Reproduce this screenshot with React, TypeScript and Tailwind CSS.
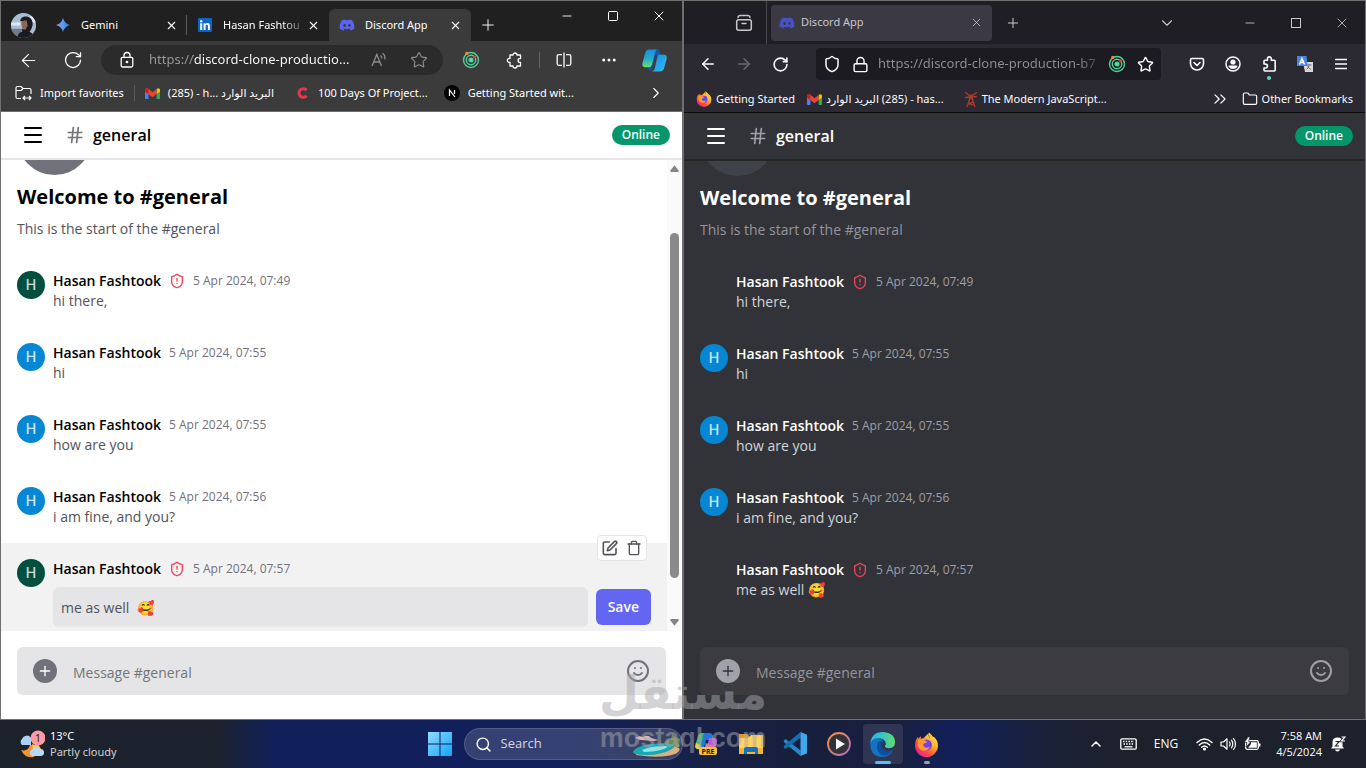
import type { ReactNode } from "react";
import {
  ArrowLeft,
  ArrowRight,
  ChevronDown,
  ChevronRight,
  ChevronsRight,
  ChevronUp,
  Ellipsis,
  Folder,
  Hash,
  Lock,
  Menu,
  Minus,
  Plus,
  RotateCw,
  Search,
  Shield,
  ShieldAlert,
  Smile,
  Square,
  Star,
  Trash,
  X,
} from "lucide-react";
import { FaDiscord } from "react-icons/fa";
import { clsx } from "clsx";

const messages = [
  { id: 1, owner: true, time: "5 Apr 2024, 07:49", text: "hi there," },
  { id: 2, owner: false, time: "5 Apr 2024, 07:55", text: "hi" },
  { id: 3, owner: false, time: "5 Apr 2024, 07:55", text: "how are you" },
  { id: 4, owner: false, time: "5 Apr 2024, 07:56", text: "i am fine, and you?" },
  { id: 5, owner: true, time: "5 Apr 2024, 07:57", text: "me as well 🥰" },
];

export default function App() {
  return (
    <div className="relative flex h-screen flex-col overflow-hidden font-['Open_Sans','DejaVu_Sans',sans-serif]">
      <div className="grid min-h-0 flex-1 grid-cols-2">
        <EdgeWindow />
        <FirefoxWindow />
      </div>
      <Taskbar />
      <Watermark />
    </div>
  );
}

function IconButton({
  label,
  className,
  children,
}: {
  label: string;
  className?: string;
  children: ReactNode;
}) {
  return (
    <button
      type="button"
      aria-label={label}
      className={clsx("grid shrink-0 place-items-center", className)}
    >
      {children}
    </button>
  );
}

/* Edge */

function EdgeWindow() {
  return (
    <section className="flex min-h-0 min-w-0 flex-col border border-[#6f6f6f] bg-[#3b3b3b] text-white">
      <div className="flex h-10 shrink-0 items-end bg-[#202020] pl-[10px]">
        <div className="mr-[9px] flex h-8 items-center">
          <ProfilePhoto />
        </div>
        <EdgeTab title="Gemini" icon={<GeminiIcon />} divider />
        <EdgeTab title="Hasan Fashtou" icon={<LinkedInIcon />} fade />
        <EdgeTab
          title="Discord App"
          icon={<FaDiscord size={16} className="text-[#5865f2]" />}
          active
        />
        <IconButton label="New tab" className="h-8 w-[34px]">
          <Plus size={18} strokeWidth={1.25} />
        </IconButton>
        <div className="ml-auto flex self-start">
          <IconButton label="Minimize" className="h-[30px] w-[46px]">
            <Minus size={14} strokeWidth={1.5} />
          </IconButton>
          <IconButton label="Maximize" className="h-[30px] w-[46px]">
            <Square size={12} strokeWidth={2} />
          </IconButton>
          <IconButton label="Close" className="h-[30px] w-[46px]">
            <X size={16} strokeWidth={1.5} />
          </IconButton>
        </div>
      </div>

      <div className="flex h-[38px] shrink-0 items-center">
        <IconButton label="Back" className="h-8 w-[55px]">
          <ArrowLeft size={21} strokeWidth={1.25} />
        </IconButton>
        <IconButton label="Refresh" className="h-8 w-[34px]">
          <RotateCw size={20} strokeWidth={1.5} />
        </IconButton>
        <div className="ml-[11px] flex h-[30px] min-w-0 flex-1 items-center rounded-full bg-[#2b2b2b] pr-3 pl-4">
          <PageLockIcon />
          <input
            aria-label="Address"
            defaultValue="https://discord-clone-productio..."
            className="ml-[12px] min-w-0 flex-1 bg-[linear-gradient(90deg,#9a9a9a_44px,#ffffff_44px)] bg-clip-text font-['Noto_Sans',sans-serif] text-[13px] text-transparent outline-none"
          />
          <IconButton label="Read aloud" className="h-6 w-10 text-[#8d8d8d]">
            <ReadAloudIcon />
          </IconButton>
          <IconButton label="Add to favorites" className="ml-2 h-6 w-6 text-[#8d8d8d]">
            <Star size={18} strokeWidth={1.5} />
          </IconButton>
        </div>
        <IconButton label="React extension" className="h-8 w-14">
          <OrbitIcon />
        </IconButton>
        <IconButton label="Extensions" className="h-8 w-8">
          <PuzzleIcon />
        </IconButton>
        <span className="mx-2 h-4 w-px bg-[#666666]" />
        <IconButton label="Split screen" className="h-8 w-8">
          <SplitIcon />
        </IconButton>
        <IconButton label="Settings" className="h-8 w-[58px]">
          <Ellipsis size={18} />
        </IconButton>
        <IconButton label="Copilot" className="mr-3 h-8 w-8">
          <CopilotIcon size={25} />
        </IconButton>
      </div>

      <nav className="flex h-8 shrink-0 items-center pb-1 pl-[14px] font-['Noto_Sans','DejaVu_Sans',sans-serif] text-[11px]">
        <a href="#import" className="flex items-center gap-2">
          <ImportFolderIcon />
          Import favorites
        </a>
        <span className="mx-[10px] h-4 w-px bg-[#5a5a5a]" />
        <a href="#mail" className="flex items-center gap-2">
          <GmailIcon />
          <span>
            (285) - h... <bdi>البريد الوارد</bdi>
          </span>
        </a>
        <a href="#projects" className="ml-5 flex items-center gap-2">
          <span className="grid h-4 w-4 place-items-center">
            <LetterCIcon />
          </span>
          100 Days Of Project...
        </a>
        <a href="#next" className="ml-4 flex items-center gap-2">
          <NextIcon />
          Getting Started wit...
        </a>
        <IconButton label="More favorites" className="mr-3 ml-auto h-6 w-7">
          <ChevronRight size={18} strokeWidth={1.5} />
        </IconButton>
      </nav>

      <div className="flex min-h-0 flex-1 flex-col border-t border-[#6f6f6f] bg-white text-black">
        <ChatHeader />
        <div className="flex min-h-0 flex-1">
          <div className="min-w-0 flex-1 overflow-hidden">
            <ChatWelcome />
            {messages.map((message) => (
              <ChatItem
                key={message.id}
                {...message}
                editing={message.id === 5}
              />
            ))}
          </div>
          <Scrollbar />
        </div>
        <Composer />
      </div>
    </section>
  );
}

function EdgeTab({
  title,
  icon,
  active,
  divider,
  fade,
}: {
  title: string;
  icon: ReactNode;
  active?: boolean;
  divider?: boolean;
  fade?: boolean;
}) {
  return (
    <div
      className={clsx(
        "relative flex h-8 w-[142px] items-center rounded-t-md px-[10px] font-['Noto_Sans',sans-serif] text-[11px]",
        active && "bg-[#3b3b3b]",
      )}
    >
      <span className="grid w-4 place-items-center">{icon}</span>
      <span
        className={clsx(
          "ml-[10px] min-w-0 flex-1 overflow-hidden whitespace-nowrap",
          fade && "mask-r-from-70%",
        )}
      >
        {title}
      </span>
      <IconButton label={`Close ${title}`} className="w-3">
        <X size={13} strokeWidth={2} />
      </IconButton>
      {divider && (
        <span className="absolute top-[6px] right-0 h-5 w-px bg-[#5c5c5c]" />
      )}
    </div>
  );
}

/* Firefox */

function FirefoxWindow() {
  return (
    <section className="flex min-h-0 min-w-0 flex-col border border-[#6f6f6f] bg-[#2b2a33] text-[#fbfbfe]">
      <div className="flex h-[43px] shrink-0 items-center bg-[#1f1e25]">
        <IconButton label="Firefox View" className="ml-10 h-9 w-10 text-[#c8c8cc]">
          <ViewIcon />
        </IconButton>
        <span className="mr-1 ml-[2px] h-full w-px bg-[#4a4950]" />
        <div className="flex h-9 w-[221px] items-center rounded bg-[#3a3944] px-2 font-['Noto_Sans',sans-serif] text-[11px] text-[#c8c8cc]">
          <FaDiscord size={16} className="text-[#4752c4]" />
          <span className="ml-[6px] flex-1">Discord App</span>
          <IconButton label="Close tab" className="w-4">
            <X size={13} strokeWidth={1.5} />
          </IconButton>
        </div>
        <IconButton label="New tab" className="h-9 w-[42px] text-[#c8c8cc]">
          <Plus size={16} strokeWidth={1.5} />
        </IconButton>
        <div className="ml-auto flex text-[#c8c8cc]">
          <IconButton label="List all tabs" className="mr-[37px] h-9 w-[46px]">
            <ChevronDown size={18} strokeWidth={1.5} />
          </IconButton>
          <IconButton label="Minimize" className="h-9 w-[46px]">
            <Minus size={14} strokeWidth={1.5} />
          </IconButton>
          <IconButton label="Maximize" className="h-9 w-[46px]">
            <span className="h-[10px] w-[10px] border border-current" />
          </IconButton>
          <IconButton label="Close" className="h-9 w-[46px]">
            <X size={16} strokeWidth={1.25} />
          </IconButton>
        </div>
      </div>

      <div className="flex h-10 shrink-0 items-center px-[6px]">
        <IconButton label="Back" className="h-8 w-9">
          <ArrowLeft size={18} strokeWidth={2} />
        </IconButton>
        <IconButton label="Forward" className="h-8 w-9 text-[#6b6a72]">
          <ArrowRight size={18} strokeWidth={2} />
        </IconButton>
        <IconButton label="Reload" className="h-8 w-9">
          <RotateCw size={17} strokeWidth={2.25} />
        </IconButton>
        <div className="mr-[18px] ml-[18px] flex h-8 min-w-0 flex-1 items-center rounded bg-[#1c1b22] px-[2px]">
          <IconButton label="Tracking protection" className="w-7">
            <Shield size={18} strokeWidth={2} />
          </IconButton>
          <IconButton label="Connection secure" className="w-7">
            <Lock size={17} strokeWidth={2} />
          </IconButton>
          <input
            aria-label="Address"
            defaultValue="https://discord-clone-production-b7"
            className="ml-1 min-w-0 flex-1 bg-[linear-gradient(90deg,#8f8f96_200px,#1c1b22_230px)] bg-clip-text font-['Noto_Sans',sans-serif] text-[13px] text-transparent outline-none"
          />
          <IconButton label="React extension" className="w-7">
            <OrbitIcon />
          </IconButton>
          <IconButton label="Bookmark this page" className="w-7">
            <Star size={17} strokeWidth={2} />
          </IconButton>
        </div>
        <IconButton label="Save to Pocket" className="h-8 w-9">
          <PocketIcon />
        </IconButton>
        <IconButton label="Account" className="h-8 w-9">
          <AccountIcon />
        </IconButton>
        <IconButton label="Extensions" className="relative h-8 w-9">
          <FirefoxPuzzleIcon />
          <span className="absolute bottom-0 h-1 w-1 rounded-full bg-[#54e0c4]" />
        </IconButton>
        <IconButton label="Translate" className="h-8 w-9">
          <TranslateIcon />
        </IconButton>
        <IconButton label="Open menu" className="h-8 w-9">
          <MenuLinesIcon />
        </IconButton>
      </div>

      <nav className="flex h-7 shrink-0 items-center px-3 pt-[2px] font-['Noto_Sans','DejaVu_Sans',sans-serif] text-[11px]">
        <a href="#start" className="flex items-center gap-1">
          <FirefoxIcon size={16} />
          Getting Started
        </a>
        <a href="#mail" className="ml-3 flex items-center gap-1">
          <GmailIcon />
          <span>
            <bdi>البريد الوارد</bdi> (285) - has...
          </span>
        </a>
        <a href="#js" className="ml-5 flex items-center gap-1">
          <TowerIcon />
          The Modern JavaScript...
        </a>
        <IconButton label="More bookmarks" className="mr-3 ml-auto">
          <ChevronsRight size={20} strokeWidth={1.5} />
        </IconButton>
        <a href="#other" className="flex items-center gap-1">
          <Folder size={16} strokeWidth={1.75} />
          Other Bookmarks
        </a>
      </nav>

      <div className="flex min-h-0 flex-1 flex-col border-t border-[#0c0c0d] bg-[#313338] text-white">
        <ChatHeader dark />
        <div className="min-h-0 flex-1 overflow-hidden">
          <ChatWelcome dark />
          {messages.map((message) => (
            <ChatItem key={message.id} {...message} dark />
          ))}
        </div>
        <Composer dark />
      </div>
    </section>
  );
}

/* Chat page, shown light in one window and dark in the other */

function ChatHeader({ dark }: { dark?: boolean }) {
  return (
    <header
      className={clsx(
        "flex h-12 shrink-0 items-center border-b-2 px-3 font-semibold",
        dark ? "border-[#262626]" : "border-neutral-200",
      )}
    >
      <IconButton label="Open channels" className="h-10 w-10">
        <Menu size={24} />
      </IconButton>
      <Hash
        className={clsx(
          "mr-2 ml-3 h-5 w-5",
          dark ? "text-zinc-400" : "text-zinc-500",
        )}
      />
      <h1 className="text-base">general</h1>
      <span className="ml-auto rounded-full bg-[#059669] px-[10px] py-[2px] text-xs text-white">
        Online
      </span>
    </header>
  );
}

function ChatWelcome({ dark }: { dark?: boolean }) {
  return (
    <div className="mb-4 space-y-2 px-4">
      {/* only the lower edge of the channel badge is scrolled into view */}
      <div className="flex h-[15px] items-end overflow-hidden">
        <div
          className={clsx(
            "h-[75px] w-[75px] shrink-0 rounded-full",
            dark ? "bg-[#404249]" : "bg-zinc-500",
          )}
        />
      </div>
      <h2 className="text-xl font-bold">Welcome to #general</h2>
      <p
        className={clsx("text-sm", dark ? "text-[#95959d]" : "text-zinc-600")}
      >
        This is the start of the #general
      </p>
    </div>
  );
}

function ChatItem({
  owner,
  time,
  text,
  dark,
  editing,
}: {
  owner: boolean;
  time: string;
  text: string;
  dark?: boolean;
  editing?: boolean;
}) {
  return (
    <article
      className={clsx(
        "relative flex items-start gap-2 p-4",
        editing && "bg-[#f2f2f2]",
      )}
    >
      <Avatar owner={owner} hidden={dark && owner} />
      <div className="min-w-0 flex-1">
        <div className="flex items-center gap-2">
          <b className="text-sm font-semibold">Hasan Fashtook</b>
          {owner && <ShieldAlert className="h-4 w-4 text-[#f43f5e]" />}
          <time
            className={clsx("text-xs", dark ? "text-zinc-400" : "text-zinc-500")}
          >
            {time}
          </time>
        </div>
        {editing ? (
          <form className="flex items-center gap-2 pt-2">
            <input
              aria-label="Edit message"
              defaultValue={text.replace(" 🥰", "  🥰")}
              className="h-10 min-w-0 flex-1 rounded-md bg-[#e5e5e7] px-2 text-sm text-zinc-600 outline-none"
            />
            <button
              type="button"
              className="h-9 rounded-md bg-[#6366f1] px-3 text-sm font-semibold text-white"
            >
              Save
            </button>
          </form>
        ) : (
          <p
            className={clsx("text-sm", dark ? "text-zinc-300" : "text-zinc-600")}
          >
            {text}
          </p>
        )}
      </div>
      {editing && (
        <div className="absolute -top-2 right-5 flex gap-2 rounded-sm border border-zinc-200 bg-white p-1 text-zinc-600">
          <IconButton label="Edit">
            <EditIcon />
          </IconButton>
          <IconButton label="Delete">
            <Trash size={16} />
          </IconButton>
        </div>
      )}
    </article>
  );
}

function Avatar({ owner, hidden }: { owner: boolean; hidden?: boolean }) {
  if (hidden) return <span className="h-7 w-7 shrink-0" />;
  return (
    <span
      className={clsx(
        "grid h-7 w-7 shrink-0 place-items-center rounded-full font-[Inter,sans-serif] text-sm font-medium text-white/80",
        owner ? "bg-[#024f40]" : "bg-[#0587d3]",
      )}
    >
      H
    </span>
  );
}

function Scrollbar() {
  return (
    <div className="flex w-[15px] shrink-0 flex-col items-center bg-[#fafafa] py-1">
      <svg width="9" height="9" viewBox="0 0 9 9" fill="#858585">
        <path d="M4.5 1.2 8.6 6.6Q9 8 8 8H1Q0 8 .4 6.6Z" />
      </svg>
      <span className="mt-[60px] h-[345px] w-[9px] rounded-full bg-[#8a8a8a]" />
      <svg
        width="9"
        height="9"
        viewBox="0 0 9 9"
        fill="#858585"
        className="mt-auto"
      >
        <path d="M4.5 7.8.4 2.4Q0 1 1 1H8Q9 1 8.6 2.4Z" />
      </svg>
    </div>
  );
}

function Composer({ dark }: { dark?: boolean }) {
  return (
    <form className="shrink-0 p-4 pb-6">
      <div
        className={clsx(
          "flex h-12 items-center rounded-md px-4",
          dark ? "bg-[#3b3b40]" : "bg-[#e5e5e7]",
        )}
      >
        <IconButton
          label="Attach a file"
          className={clsx(
            "h-6 w-6 rounded-full",
            dark ? "bg-[#a1a1aa] text-[#313338]" : "bg-zinc-500 text-white",
          )}
        >
          <Plus size={16} />
        </IconButton>
        <input
          aria-label="Message #general"
          placeholder="Message #general"
          className={clsx(
            "h-6 min-w-0 flex-1 px-4 pt-[2px] text-sm outline-none",
            dark ? "placeholder:text-[#95959d]" : "placeholder:text-[#757575]",
          )}
        />
        <IconButton
          label="Insert emoji"
          className={dark ? "text-zinc-400" : "text-zinc-500"}
        >
          <Smile size={24} />
        </IconButton>
      </div>
    </form>
  );
}

/* Windows taskbar */

function Taskbar() {
  return (
    <footer className="flex h-12 shrink-0 items-center bg-[linear-gradient(90deg,#1c222c_0%,#1c222e_16%,#11205a_20%,#11205a_42%,#17214c_48%,#181f3c_58%,#181f40_66%,#11205a_70%,#1a2036_77%,#1c212b_82%)] text-xs text-white">
      <div className="flex flex-1 items-center gap-[5px] pl-[18px]">
        <WeatherIcon />
        <div className="font-['Noto_Sans',sans-serif] text-[11px] leading-4">
          <p>13°C</p>
          <p className="text-[#cfd0d2]">Partly cloudy</p>
        </div>
      </div>
      <div className="flex items-center gap-1">
        <IconButton label="Start" className="h-10 w-10">
          <WindowsIcon />
        </IconButton>
        <label className="flex h-8 w-[219px] items-center rounded-full border border-white/15 bg-white/15 pr-px pl-[10px]">
          <Search size={17} strokeWidth={2} />
          <input
            aria-label="Search"
            placeholder="Search"
            className="ml-[9px] min-w-0 flex-1 text-[13px] outline-none placeholder:text-[#d6d8e2]"
          />
          <BeachIcon />
        </label>
        <IconButton label="Copilot preview" className="h-10 w-10">
          <CopilotPreIcon />
        </IconButton>
        <IconButton label="File Explorer" className="h-10 w-10">
          <ExplorerIcon />
        </IconButton>
        <IconButton label="Visual Studio Code" className="h-10 w-10">
          <CodeIcon />
        </IconButton>
        <IconButton label="Media Player" className="h-10 w-10">
          <PlayerIcon />
        </IconButton>
        <IconButton
          label="Microsoft Edge"
          className="relative h-10 w-10 rounded bg-white/10"
        >
          <EdgeIcon />
          <span className="absolute bottom-0 h-[3px] w-4 rounded-full bg-[#4cc2ff]" />
        </IconButton>
        <IconButton label="Firefox" className="relative h-10 w-10">
          <FirefoxIcon size={25} />
          <span className="absolute bottom-0 h-[3px] w-[6px] rounded-full bg-[#9a9da5]" />
        </IconButton>
      </div>
      <div className="flex flex-1 items-center justify-end pr-[18px]">
        <IconButton label="Show hidden icons" className="w-8">
          <ChevronUp size={16} strokeWidth={2.25} />
        </IconButton>
        <IconButton label="Touch keyboard" className="w-8">
          <KeyboardIcon />
        </IconButton>
        <button type="button" className="w-11">
          ENG
        </button>
        <div className="flex w-20 items-center justify-center gap-[7px]">
          <WifiIcon />
          <VolumeIcon />
          <BatteryIcon />
        </div>
        <div className="w-[54px] text-right text-[11px] leading-4 whitespace-nowrap">
          <p>7:58 AM</p>
          <p>4/5/2024</p>
        </div>
        <IconButton label="Notifications" className="ml-[6px] w-5">
          <BellIcon />
        </IconButton>
      </div>
    </footer>
  );
}

function Watermark() {
  return (
    <div
      aria-hidden="true"
      className="pointer-events-none absolute bottom-4 left-1/2 -translate-x-1/2 text-center font-bold text-[#a8a8ac]/50"
    >
      <p
        dir="rtl"
        className="pb-2 font-['DejaVu_Sans',sans-serif] text-[46px] leading-[46px]"
      >
        مستقل
      </p>
      <p className="font-['Liberation_Sans',sans-serif] text-[27px] leading-7">
        mostaql.com
      </p>
    </div>
  );
}

/* Icons */

function ProfilePhoto() {
  return (
    <svg width="25" height="25" viewBox="0 0 24 24">
      <clipPath id="photo">
        <circle cx="12" cy="12" r="12" />
      </clipPath>
      <g clipPath="url(#photo)">
        <path fill="#a9bed6" d="M0 0h24v24H0z" />
        <path fill="#dfe7ef" d="M0 9h9v3H0zM18 3h6v6h-6z" />
        <path fill="#6f7c88" d="M0 15h10v9H0z" />
        <path fill="#8d6654" d="M10 6h6l1 8-3 3-3-2-1-4z" />
        <path
          fill="#1a1a20"
          d="M9 8c-1-5 9-7 11-1 2 4 0 8-2 11l-4 2-3-2-1-3 4 1 2-4-1-5zM6 24c0-4 4-7 8-7s8 3 8 7z"
        />
      </g>
    </svg>
  );
}

function GeminiIcon() {
  return (
    <svg width="14" height="14" viewBox="0 0 14 14">
      <defs>
        <linearGradient id="gem" x1="0" x2="1">
          <stop offset="0" stopColor="#8f8fd6" />
          <stop offset=".5" stopColor="#5b9cf0" />
          <stop offset="1" stopColor="#2f6cd0" />
        </linearGradient>
      </defs>
      <path d="M7 0Q8.500 5.500 14 7 8.500 8.500 7 14 5.500 8.500 0 7 5.500 5.500 7 0Z" fill="url(#gem)" />
    </svg>
  );
}

function LinkedInIcon() {
  return (
    <svg width="14" height="14" viewBox="0 0 14 14">
      <rect width="14" height="14" rx="1" fill="#0a66c2" />
      <g fill="#fff">
        <circle cx="3.2" cy="3.2" r="1.2" />
        <path d="M2.2 5.3h2V12h-2zM5.6 5.3h1.9v.9c.4-.7 1.1-1.1 2-1.1 1.9 0 2.4 1.2 2.4 3V12h-2V8.500c0-.9-.1-1.700-1.100-1.700s-1.200.8-1.200 1.700V12h-2z" />
      </g>
    </svg>
  );
}

function PageLockIcon() {
  return (
    <svg width="20" height="20" viewBox="0 0 20 20" fill="none" stroke="currentColor" strokeWidth="1.3">
      <rect x="4.2" y="7.3" width="11.6" height="9.7" rx="1.5" />
      <path d="M7 7V5.500a3 3 0 0 1 6 0V7" />
      <circle cx="10" cy="12" r=".7" fill="currentColor" />
    </svg>
  );
}

function ReadAloudIcon() {
  return (
    <svg width="18" height="18" viewBox="0 0 18 18" fill="none" stroke="currentColor" strokeWidth="1.3">
      <path d="M2 15 6.800 3.500 11.500 15M3.800 11h6M10.500 4.500q1.500 1 1.300 3M12.500 2.300q3 2 2.300 6" />
    </svg>
  );
}

function OrbitIcon() {
  return (
    <svg width="18" height="18" viewBox="0 0 18 18" fill="none" stroke="#4fd196" strokeWidth="1.4">
      <circle cx="9" cy="9" r="7.5" />
      <circle cx="9" cy="9" r="4.7" />
      <circle cx="9" cy="9" r="1.9" fill="#5fe0ae" />
      <circle cx="4.8" cy="2.4" r="1.7" fill="#f08a24" stroke="none" />
      <circle cx="12.6" cy="5.8" r="1.6" fill="#e0443a" stroke="none" />
    </svg>
  );
}

function PuzzleIcon() {
  return (
    <svg width="18" height="18" viewBox="0 0 18 18" fill="none" stroke="currentColor" strokeWidth="1.3" strokeLinejoin="round">
      <path d="M4 4h3a2 2 0 1 1 4 0h3.500v3.500H14a1.900 1.900 0 0 0 0 3.800h.5V15H11a2 2 0 0 1-4 0H4v-3.700a2 2 0 1 1 0-3.800z" />
    </svg>
  );
}

function SplitIcon() {
  return (
    <svg width="18" height="18" viewBox="0 0 18 18" fill="none" stroke="currentColor" strokeWidth="1.3">
      <path d="M9 1.500v15M7 3.700H3.700q-1.500 0-1.500 1.500v7.600q0 1.500 1.500 1.500H7M11 3.700h3.300q1.500 0 1.500 1.500v7.600q0 1.500-1.500 1.500H11" />
    </svg>
  );
}

function CopilotIcon({ size }: { size: number }) {
  return (
    <svg width={size} height={size} viewBox="0 0 24 24">
      <defs>
        <linearGradient id="coA" x1="0" y1="0" x2="0" y2="1">
          <stop offset="0" stopColor="#1c8fe0" />
          <stop offset=".5" stopColor="#25a9c8" />
          <stop offset="1" stopColor="#6fe06a" />
        </linearGradient>
        <linearGradient id="coB" x1="0" y1="0" x2="1" y2="1">
          <stop offset="0" stopColor="#1b86dc" />
          <stop offset="1" stopColor="#2fc0f5" />
        </linearGradient>
      </defs>
      <path fill="#1458a8" d="M11 1.500h3.500q2 0 2.600 2L18 7h-5L9.500 20 8 22q-2-.5-2.500-3.500L9 12z" />
      <path fill="url(#coB)" d="M15.500 6.500H21q3.500 0 2.600 4l-2.400 9q-.8 3-4 3H9q2.500 0 3.300-3l2-9.500q.4-2.500 1.200-3.500z" />
      <path fill="url(#coA)" d="M7 1.500h8q-2 .5-2.600 3L9.500 16q-.7 2.500-3 2.500H3q-3.300 0-2.500-4L3 5q.8-3.500 4-3.500z" />
    </svg>
  );
}

function ImportFolderIcon() {
  return (
    <svg width="17" height="16" viewBox="0 0 17 16" fill="none" stroke="currentColor" strokeWidth="1.2" strokeLinejoin="round">
      <path d="M6 13.500H2.500q-1.500 0-1.500-1.500V3q0-1.500 1.500-1.500H6L8 3.500h6.500q1.500 0 1.500 1.500v4M1 5.500h5l2-2M8 13h8M10 11l-2 2 2 2M14 11l2 2-2 2" />
    </svg>
  );
}

function GmailIcon() {
  return (
    <svg width="15" height="11" viewBox="0 0 15 11">
      <path fill="#4285f4" d="M0 2h3.400v9H1q-1 0-1-1z" />
      <path fill="#34a853" d="M11.600 3H15v7q0 1-1 1h-2.400z" />
      <path fill="#fbbc04" d="M11.600 1q1.500-1.400 3-.3.400.4.400 1.300v1.800L11.600 6z" />
      <path fill="#ea4335" d="M0 2Q0-.2 2 .1 2.600.2 7.500 4.200L11.600 1v5L7.500 9.200 0 3.800z" />
      <path fill="#c5221f" d="M0 2Q0-.2 2 .1q.6.200 1.400.9V6L0 3.800z" />
    </svg>
  );
}

function LetterCIcon() {
  return (
    <svg width="12" height="12" viewBox="0 0 12 12" fill="none" stroke="#e8364f" strokeWidth="3">
      <path d="M10.500 3.200A4.300 4.300 0 1 0 10.500 8.800" />
    </svg>
  );
}

function NextIcon() {
  return (
    <svg width="16" height="16" viewBox="0 0 16 16">
      <circle cx="8" cy="8" r="8" fill="#050505" />
      <path d="M5.500 11V5l5.500 7M10.500 5v4" fill="none" stroke="#fff" strokeWidth="1.2" />
    </svg>
  );
}

function ViewIcon() {
  return (
    <svg width="18" height="18" viewBox="0 0 18 18" fill="none" stroke="currentColor" strokeWidth="1.5" strokeLinecap="round">
      <rect x="1.7" y="5.7" width="14.6" height="10.6" rx="2" />
      <path d="M3 3.400Q3.200 1.500 5 1.500h8q1.800 0 2 1.900M7 9.500h4" />
    </svg>
  );
}

function PocketIcon() {
  return (
    <svg width="16" height="16" viewBox="0 0 16 16" fill="none" stroke="currentColor" strokeWidth="1.6" strokeLinecap="round" strokeLinejoin="round">
      <path d="M3 2.500h10q1.500 0 1.500 1.500v3.500a6.500 6.500 0 0 1-13 0V4Q1.500 2.500 3 2.500zM5 6.500l3 3 3-3" />
    </svg>
  );
}

function AccountIcon() {
  return (
    <svg width="16" height="16" viewBox="0 0 16 16">
      <circle cx="8" cy="8" r="7" fill="none" stroke="currentColor" strokeWidth="1.5" />
      <circle cx="8" cy="6" r="2.6" fill="currentColor" />
      <path d="M3.500 10.500q0-1 1-1h7q1 0 1 1-1.500 2.500-4.500 2.500t-4.500-2.500z" fill="currentColor" />
    </svg>
  );
}

function FirefoxPuzzleIcon() {
  return (
    <svg width="16" height="18" viewBox="0 0 16 18" fill="none" stroke="currentColor" strokeWidth="1.6" strokeLinejoin="round">
      <path d="M3 9V6q0-.7.7-.7H6.500V3.800a1.900 1.900 0 0 1 3.800 0v1.500h3q.9 0 .9.900V15q0 1-.9 1H4q-1 0-1-1v-2h1.500a1.900 1.900 0 0 0 0-3.900z" />
    </svg>
  );
}

function TranslateIcon() {
  return (
    <svg width="16" height="16" viewBox="0 0 16 16">
      <path fill="#d8d8da" d="M6 6h10v10H8z" />
      <path stroke="#777" fill="none" d="M9.500 9h5M12 8v1.500q-.5 2.500-2.500 4M10.500 10q1 2.500 3.500 3.500" />
      <path fill="#4a86e0" d="M0 0h9.500l1 10H0z" />
      <path stroke="#fff" fill="none" strokeWidth="1.4" d="M2.500 8.500 5 2.500l2.500 6M3.500 6.500h3" />
    </svg>
  );
}

function MenuLinesIcon() {
  return (
    <svg width="14" height="12" viewBox="0 0 14 12" stroke="currentColor" strokeWidth="1.5">
      <path d="M1 1.500h12M1 6h12M1 10.500h12" />
    </svg>
  );
}

function TowerIcon() {
  return (
    <svg width="14" height="15" viewBox="0 0 14 15" fill="none" stroke="#a8392d" strokeWidth="1.4">
      <path d="M3 15 6 6h2l3 9M5 11l4 2M9 9.500l-4 3M1 0l5 4M13 0 8 4M1 5.500l12-1" />
      <circle cx="7" cy="4.5" r="1.6" fill="#a8392d" />
    </svg>
  );
}

function FirefoxIcon({ size }: { size: number }) {
  return (
    <svg width={size} height={size} viewBox="0 0 24 24">
      <defs>
        <linearGradient id="fox" x1=".9" y1=".1" x2=".2" y2=".9">
          <stop offset="0" stopColor="#fff04a" />
          <stop offset=".4" stopColor="#ffa52a" />
          <stop offset=".7" stopColor="#ff5140" />
          <stop offset="1" stopColor="#f0257e" />
        </linearGradient>
      </defs>
      <path
        fill="url(#fox)"
        d="M14.500.5q-1.500 3 1 5.500L19 4.500q4 3.500 4 8.500a11 11 0 0 1-22 0q0-5 2.500-8.500L4 6.500 6.500 4v2.500L9 6q3-2.500 5.500-5.500z"
      />
      <circle cx="12" cy="12.5" r="5.2" fill="#7542e5" />
      <path fill="#ff9a2e" d="M4 7.500q4-1.500 6 .5l2.500 1q0 1.500-3 2-1.500 2 .5 3.500 2.500 1.500 5-.5-1 4-5.500 4-5-.5-6-5.500z" />
      <path fill="#ffc43a" d="M14.500.5q-1 4 2 6.500 2.500 3 1 7.500 2-.5 2.500-3Q21 6 14.500.5z" />
    </svg>
  );
}

function EditIcon() {
  return (
    <svg width="16" height="16" viewBox="0 0 24 24" fill="none" stroke="currentColor" strokeWidth="2.4" strokeLinecap="round" strokeLinejoin="round">
      <path d="M11 3H4a2 2 0 0 0-2 2v15a2 2 0 0 0 2 2h15a2 2 0 0 0 2-2v-7" />
      <path d="M18.500 2.500a2.120 2.120 0 0 1 3 3L12 15l-4 1 1-4Z" />
    </svg>
  );
}

function WeatherIcon() {
  return (
    <svg width="27" height="28" viewBox="0 0 27 28">
      <path fill="#a9d0f5" d="M4 15a4 4 0 0 1 0-6 5 5 0 0 1 9-1v7z" />
      <path fill="#f3932f" d="M3 20q7 2 9-5l5 0 3 4-4 8q-4 1-8-1-3-2-5-6z" />
      <path fill="#ffc83d" d="m14 14 3 1 3-1 3 5h-8z" />
      <path fill="#b7d8f6" d="M14 26a3.500 3.500 0 0 1 0-6.500 4.500 4.500 0 0 1 8-.5 3.500 3.500 0 0 1 1 7z" />
      <circle cx="20" cy="8" r="7.5" fill="#ff99a4" />
      <text x="20" y="12" textAnchor="middle" fontSize="11" fill="#1a1a1a">
        1
      </text>
    </svg>
  );
}

function WindowsIcon() {
  return (
    <svg width="24" height="24" viewBox="0 0 24 24">
      <defs>
        <linearGradient id="win" gradientUnits="userSpaceOnUse" x1="0" y1="0" x2="24" y2="24">
          <stop offset="0" stopColor="#8fdcff" />
          <stop offset="1" stopColor="#12a4f5" />
        </linearGradient>
      </defs>
      <path fill="url(#win)" d="M0 0h11.500v11.500H0zM12.500 0H24v11.500H12.500zM0 12.500h11.500V24H0zM12.500 12.500H24V24H12.500z" />
    </svg>
  );
}

function BeachIcon() {
  return (
    <svg width="50" height="28" viewBox="0 0 50 28">
      <path fill="#e6b9b3" d="M4 8q3-3 8-1 5-3 8 1l7 2q-6 2-11 0-6 1-12-2z" />
      <path fill="#6f8a4c" d="M31 15q4-5 9-6l1-5 3 3 5 2-1 8-6 2-6-2z" />
      <path fill="#dbb27b" d="M5 24q10-5 22-7 12-3 21 1 2 3-4 6-14 5-39 1z" />
      <path fill="#18a9b8" d="M2 22q2-5 13-7 14-3 25-1 6 2 1 5-10 6-26 6-13 0-13-3z" />
      <path fill="#8fe3e2" d="M11 20q8-4 24-4 3 1-2 3-9 3-20 3z" />
    </svg>
  );
}

function CopilotPreIcon() {
  return (
    <svg width="26" height="26" viewBox="0 0 26 26">
      <path fill="#2377d8" d="M9 2h7q2 0 3 3l1 4h-8L9 20H5z" />
      <path fill="#39b86a" d="M7 2h3L8 10 5 17H3q-2-1-1.500-4L4 5q1-3 3-3z" />
      <path fill="#ead14a" d="m2 12 5 2-1 4q-4 1-5-2z" />
      <path fill="#b45be0" d="M15 7h5q4 0 3 4l-2 7h-8z" />
      <path fill="#f0718a" d="m12 13 9 1-1 4h-9z" />
      <rect x="5" y="16" width="18" height="8" rx="2" fill="#f9c23c" />
      <text x="14" y="22.5" textAnchor="middle" fontSize="7" fontWeight="700" fill="#241a00">
        PRE
      </text>
    </svg>
  );
}

function ExplorerIcon() {
  return (
    <svg width="26" height="22" viewBox="0 0 26 22">
      <path fill="#e8961e" d="M1 1h8l3 3h5v5H1z" />
      <path fill="#ffd45e" d="M1 5h9l3-3h12v19H1z" />
      <path fill="#f4b62d" d="M1 15h24v6H1z" />
      <path fill="#1470c4" d="M6 21v-5q0-2 2-2h10q2 0 2 2v5h-3v-2H9v2z" />
    </svg>
  );
}

function CodeIcon() {
  return (
    <svg width="24" height="24" viewBox="0 0 24 24">
      <path fill="#2489ca" d="M.8 8.500 2.500 7 17.500 18.500V24L.8 9.900z" />
      <path fill="#1070b3" d="M.8 15.500 2.500 17 17.500 5.500V0L.8 14.100z" />
      <path fill="#3ca8f0" d="M17.500 0 24 2.800v18.400L17.500 24z" />
    </svg>
  );
}

function PlayerIcon() {
  return (
    <svg width="24" height="24" viewBox="0 0 24 24">
      <defs>
        <linearGradient id="ring" x1="0" y1="0" x2="1" y2="1">
          <stop offset="0" stopColor="#f5953a" />
          <stop offset="1" stopColor="#b06ac8" />
        </linearGradient>
      </defs>
      <circle cx="12" cy="12" r="11" fill="#333238" stroke="url(#ring)" strokeWidth="1.8" />
      <path fill="#fff" d="M9 6.500v11L18 12z" />
    </svg>
  );
}

function EdgeIcon() {
  return (
    <svg width="25" height="25" viewBox="0 0 24 24">
      <defs>
        <linearGradient id="edgeTop" x1="0" x2="1">
          <stop offset="0" stopColor="#2bb3e8" />
          <stop offset=".5" stopColor="#35c8c0" />
          <stop offset="1" stopColor="#62dc6a" />
        </linearGradient>
      </defs>
      <path fill="#1272c6" d="M.2 12Q1 5 8 6q4 1 4.500 4-3-.5-3.500 2.500 0 5 6 6.500 4 .5 7-2-3 7-10 7Q1 24 .2 12z" />
      <path fill="#0d4f9e" d="M7 11q2-4 6-1.500-3 1.500-2 4.500 1.500 4.500 7 4.500l4-1.500q-4 6.500-10 5.500-6.500-3-5-11.500z" />
      <path fill="url(#edgeTop)" d="M.2 11Q1.500 0 12.500 0 24 1 24 10q0 5.500-6 5.500-4.500-.5-3.500-2.500 1.500-2 0-4Q12.500 6 8 6 2 6 .2 11z" />
    </svg>
  );
}

function KeyboardIcon() {
  return (
    <svg width="17" height="12" viewBox="0 0 17 12" fill="none" stroke="currentColor" strokeWidth="1.3">
      <rect x=".8" y=".8" width="15.4" height="10.4" rx="1.3" />
      <path strokeDasharray="1.5 1.2" d="M3 3.500h11M3.500 6h10" />
      <path d="M4.500 8.800h8" />
    </svg>
  );
}

function WifiIcon() {
  return (
    <svg width="17" height="14" viewBox="0 0 17 14" fill="none" stroke="currentColor" strokeWidth="1.4" strokeLinecap="round">
      <path d="M1 5.500q7.500-7 15 0M3.300 8q5.200-5 10.400 0M5.700 10.300q2.800-2.600 5.600 0" />
      <circle cx="8.5" cy="12" r=".9" fill="currentColor" />
    </svg>
  );
}

function VolumeIcon() {
  return (
    <svg width="17" height="14" viewBox="0 0 17 14" fill="none" stroke="currentColor" strokeWidth="1.2" strokeLinejoin="round" strokeLinecap="round">
      <path d="M1 5h2.500L7 1.800v10.400L3.500 9H1zM9.500 5q1.200 2 0 4M11.500 3.200q2.500 3.800 0 7.600M13.500 1.500q4 5.500 0 11" />
    </svg>
  );
}

function BatteryIcon() {
  return (
    <svg width="17" height="14" viewBox="0 0 17 14">
      <rect x="1.7" y="3.7" width="12.6" height="8.6" rx="1.5" fill="none" stroke="currentColor" strokeWidth="1.3" />
      <path fill="currentColor" d="M7 5.200h5.800v5.600H4L7 7zM15 6.500h1.500v3H15z" />
      <path fill="currentColor" stroke="#1c212b" strokeWidth=".6" d="M4 0 .5 5.500H3L2 10l5-5.500H4.500L6 0z" />
    </svg>
  );
}

function BellIcon() {
  return (
    <svg width="16" height="16" viewBox="0 0 16 16">
      <path fill="currentColor" d="M2.500 6.500q0-5 5-5t5 5v4l1.500 2H1l1.500-2zM5 13.500h5q-.5 2-2.500 2t-2.500-2z" />
      <path d="M5.500 5.500H9L5.500 10H9" fill="none" stroke="#1c212b" strokeWidth="1.2" />
      <path d="M11.500 1H15l-3.500 4H15" fill="none" stroke="#1c212b" strokeWidth="2.6" />
      <path d="M11.500 1H15l-3.500 4H15" fill="none" stroke="currentColor" strokeWidth="1.2" />
    </svg>
  );
}
